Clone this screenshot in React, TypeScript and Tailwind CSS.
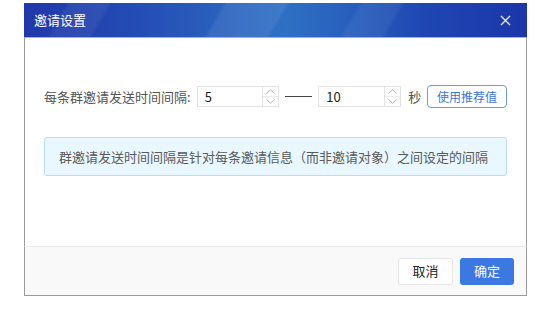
import React from "react";

const font = { fontFamily: '"Microsoft YaHei", "Noto Sans CJK SC", "Noto Sans", sans-serif' };

function Spin({ value }: { value: string }) {
  return (
    <div className="flex h-[21px] w-[83px] border border-[#e3e3e3] bg-white">
      <div className="flex flex-1 items-center pl-[7px] text-[13px] text-[#222]">{value}</div>
      <div className="flex w-[16px] flex-col border-l border-[#e3e3e3]">
        <div className="flex flex-1 items-center justify-center border-b border-[#ececec]">
          <svg width="9" height="5" viewBox="0 0 9 5">
            <path d="M0.5 4.5 L4.5 0.8 L8.5 4.5" fill="none" stroke="#b5b5b5" strokeWidth="1" />
          </svg>
        </div>
        <div className="flex flex-1 items-center justify-center">
          <svg width="9" height="5" viewBox="0 0 9 5">
            <path d="M0.5 0.5 L4.5 4.2 L8.5 0.5" fill="none" stroke="#b5b5b5" strokeWidth="1" />
          </svg>
        </div>
      </div>
    </div>
  );
}

export default function App() {
  return (
    <div className="h-[331px] w-[542px] bg-white" style={font}>
      <div className="ml-[24px] pt-[3px] w-[503px]">
        <div className="relative flex h-[34px] items-center justify-between overflow-hidden bg-[linear-gradient(90deg,#2038aa_0%,#244cb4_22%,#2b64bf_42%,#2e70c4_52%,#2860bd_64%,#1f46b2_80%,#1c36aa_100%)] pl-[10px] pr-[16px]">
          <div className="pointer-events-none absolute inset-0 bg-[linear-gradient(120deg,transparent_0%,transparent_8%,rgba(255,255,255,0.06)_9%,rgba(255,255,255,0.06)_16%,transparent_17%,transparent_38%,rgba(255,255,255,0.08)_39%,rgba(255,255,255,0.08)_50%,transparent_51%,transparent_64%,rgba(255,255,255,0.06)_65%,rgba(255,255,255,0.06)_72%,transparent_73%)]" />
          <span className="relative text-[13px] text-white">邀请设置</span>
          <svg className="relative" width="11" height="11" viewBox="0 0 11 11">
            <path d="M1 1 L10 10 M10 1 L1 10" stroke="#e6ecfa" strokeWidth="1.4" />
          </svg>
        </div>
        <div className="h-[209px] border-x border-t border-[#9fb2da] border-x-[#9a9a9a] bg-white px-[19px] pt-[47px]">
          <div className="flex h-[23px] items-center">
            <span className="w-[153px] whitespace-nowrap text-[13px] text-[#555]">每条群邀请发送时间间隔:</span>
            <Spin value="5" />
            <div className="mx-[6px] h-px w-[27px] bg-[#444]" />
            <Spin value="10" />
            <span className="ml-[7px] text-[13px] text-[#555]">秒</span>
            <button className="ml-[6px] flex h-[23px] w-[80px] items-center justify-center rounded-[4px] border border-[#6b98e8] bg-white text-[12px] text-[#3d74d8]">
              使用推荐值
            </button>
          </div>
          <div className="mt-[29px] flex h-[39px] items-center rounded-[3px] border border-[#b8def0] bg-[#e9f7fe] pl-[14px] text-[13px] text-[#5a5a5a]">
            群邀请发送时间间隔是针对每条邀请信息（而非邀请对象）之间设定的间隔
          </div>
        </div>
        <div className="flex h-[50px] items-center justify-end gap-[7px] border-x border-b border-t border-[#9a9a9a] border-t-[#ececec] bg-[#f9f9f9] pr-[12px]">
          <button className="flex h-[27px] w-[55px] items-center justify-center rounded-[3px] border border-[#e6e6e6] bg-white text-[13px] text-[#222]">
            取消
          </button>
          <button className="flex h-[27px] w-[54px] items-center justify-center rounded-[3px] bg-[#3b78e2] text-[13px] text-white">
            确定
          </button>
        </div>
      </div>
    </div>
  );
}
